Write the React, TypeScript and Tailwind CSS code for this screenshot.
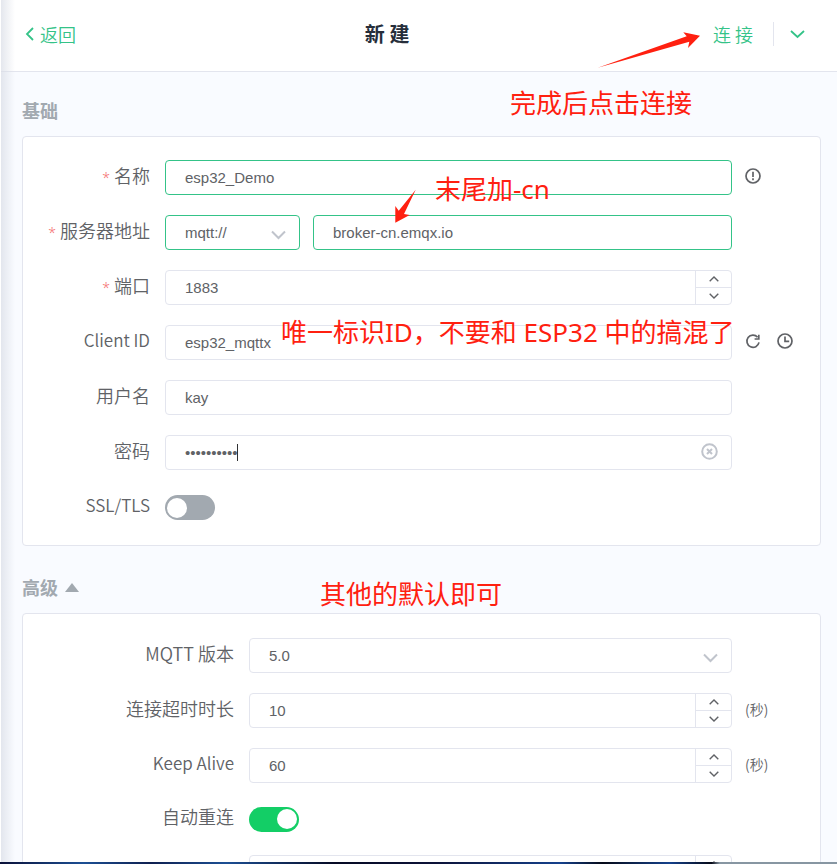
import { useState } from "react";
import type { ReactNode } from "react";

const inputFont = "font-['Liberation_Sans','Noto_Sans_CJK_SC',sans-serif]";
const fieldBase = `block h-[35px] w-full appearance-none rounded border bg-white px-[19px] text-[15px] text-[#606266] outline-none ${inputFont}`;
const plain = "border-[#e3e5ee]";
const active = "border-[#34c388]";

function Chevron({ className, d = "M1 1.5l6.5 6.5L14 1.5", width = 2 }: { className?: string; d?: string; width?: number }) {
  return (
    <svg className={className} width="15" height="10" viewBox="0 0 15 10" fill="none" stroke="currentColor" strokeWidth={width} aria-hidden="true">
      <path d={d} />
    </svg>
  );
}

type RowProps = {
  id: string;
  label?: string;
  required?: boolean;
  wide?: boolean;
  short?: boolean;
  latin?: boolean;
  extra?: ReactNode;
  children: ReactNode;
};

function Row({ id, label, required, wide, short, latin, extra, children }: RowProps) {
  return (
    <div className={`flex items-center ${short ? "h-8" : "h-[35px]"}`}>
      <div className={`${wide ? "w-[211px]" : "w-[127px]"} flex shrink-0 items-center justify-end pb-1.5`}>
        {label && (
          <label htmlFor={id} className={`leading-7 font-[350] whitespace-nowrap ${latin ? "text-[17px]" : "text-lg"}`}>
            {required && <span className="mr-1 font-['Noto_Sans'] text-sm text-[#f56c6c]">*</span>}
            {label}
          </label>
        )}
      </div>
      <div className="ml-[15px] flex min-w-0 flex-1 items-center gap-[13px]">{children}</div>
      <div className="flex w-[88px] shrink-0 items-center gap-4 pb-1 pl-[13px] text-sm font-[350]">{extra}</div>
    </div>
  );
}

function TextField({ id, value, on }: { id: string; value: string; on?: boolean }) {
  return <input id={id} type="text" defaultValue={value} className={`${fieldBase} ${on ? active : plain}`} />;
}

function NumberField({ id, value, label }: { id: string; value: number; label?: string }) {
  const [n, setN] = useState(value);
  return (
    <div className="flex h-[35px] w-full overflow-hidden rounded border border-[#e3e5ee] bg-white">
      <input
        id={id}
        type="text"
        inputMode="numeric"
        aria-label={label}
        value={n}
        onChange={(e) => setN(Number(e.target.value) || 0)}
        className={`min-w-0 flex-1 px-[19px] pt-0.5 text-[15px] text-[#606266] outline-none ${inputFont}`}
      />
      <div className="flex w-9 flex-col border-l border-[#e3e5ee]">
        <button type="button" aria-label="增加" onClick={() => setN(n + 1)} className="flex flex-1 items-center justify-center border-b border-[#e3e5ee]">
          <svg width="10" height="6" viewBox="0 0 10 6" fill="none" stroke="currentColor" strokeWidth="1.4"><path d="M.7 5.2L5 1l4.3 4.2" /></svg>
        </button>
        <button type="button" aria-label="减少" onClick={() => setN(n - 1)} className="flex flex-1 items-center justify-center">
          <svg width="10" height="6" viewBox="0 0 10 6" fill="none" stroke="currentColor" strokeWidth="1.4"><path d="M.7.8L5 5 9.3.8" /></svg>
        </button>
      </div>
    </div>
  );
}

function SelectField({ id, label, value, on, options }: { id: string; label?: string; value: string; on?: boolean; options: string[] }) {
  return (
    <div className="relative w-full">
      <select id={id} aria-label={label} defaultValue={value} className={`${fieldBase} pt-0.5 ${on ? active : plain}`}>
        {options.map((o) => <option key={o}>{o}</option>)}
      </select>
      <Chevron className="pointer-events-none absolute top-[15px] right-3.5 text-[#c0c4cc]" />
    </div>
  );
}

function Toggle({ id, on }: { id: string; on?: boolean }) {
  return (
    <input
      id={id}
      type="checkbox"
      role="switch"
      defaultChecked={on}
      className="flex h-[25px] w-[50px] appearance-none items-center rounded-full bg-[#a2a9b0] px-0.5 before:size-5 before:rounded-full before:bg-white checked:justify-end checked:bg-[#13ce66]"
    />
  );
}

function IconButton({ label, children }: { label: string; children: ReactNode }) {
  return (
    <button type="button" aria-label={label} className="shrink-0">
      <svg width="16" height="16" viewBox="0 0 16 16" fill="none" stroke="currentColor" strokeWidth="1.7">{children}</svg>
    </button>
  );
}

const note =
  "pointer-events-none absolute font-['Noto_Sans','Noto_Sans_CJK_SC',sans-serif] text-[26px] leading-9 whitespace-nowrap text-[#ff2010]";

export default function App() {
  return (
    <div className="relative flex h-screen flex-col overflow-hidden bg-[#f9fbff] font-['Noto_Sans_CJK_SC',sans-serif] text-[#606266]">
      <header className="grid h-[72px] shrink-0 grid-cols-[6fr_1fr_7fr] items-center border-b border-[#e3e5ee] bg-white pr-8 pb-[3px] pl-[25px]">
        <a href="#back" className="flex items-center gap-1.5 text-lg font-[350] text-[#34c388]">
          <svg width="9" height="14" viewBox="0 0 9 14" fill="none" stroke="currentColor" strokeWidth="1.8" aria-hidden="true"><path d="M8 1L2 7l6 6" /></svg>
          返回
        </a>
        <h1 className="text-center text-xl font-bold whitespace-nowrap text-[#262e3b]">新 建</h1>
        <div className="flex items-center justify-end text-[#34c388]">
          <button type="button" className="text-lg font-[350]">连 接</button>
          <span className="mr-4 ml-5 h-6 w-px bg-[#e3e5ee]" />
          <button type="button" aria-label="更多"><Chevron width={1.8} d="M1 2l6.5 6L14 2" /></button>
        </div>
      </header>

      <main className="min-h-0 flex-1 overflow-hidden pr-4 pl-[22px]">
        <h2 className="pt-6 text-lg leading-7 font-bold text-[#a2a9b0]">基础</h2>
        <section className="mt-3 flex flex-col gap-5 rounded border border-[#e3e5ee] bg-white pt-[23px] pb-5">
          <Row id="name" label="名称" required extra={<IconButton label="提示"><circle cx="8" cy="8" r="7" /><path d="M8 3.7v5.2M8 10.3v2" /></IconButton>}>
            <TextField id="name" value="esp32_Demo" on />
          </Row>
          <Row id="host" label="服务器地址" required>
            <div className="w-[135px] shrink-0">
              <SelectField id="protocol" label="协议" value="mqtt://" on options={["mqtt://", "mqtts://", "ws://", "wss://"]} />
            </div>
            <TextField id="host" value="broker-cn.emqx.io" on />
          </Row>
          <Row id="port" label="端口" required>
            <NumberField id="port" value={1883} />
          </Row>
          <Row
            id="client"
            label="Client ID"
            latin
            extra={
              <>
                <IconButton label="刷新"><path d="M14 9.4A6.1 6.1 0 1 1 12.6 4.2M13.8 1.8v4.2H9.6" /></IconButton>
                <IconButton label="时间"><circle cx="8" cy="8" r="7" /><path d="M8 3.6v4.8h4.2" /></IconButton>
              </>
            }
          >
            <TextField id="client" value="esp32_mqttx" />
          </Row>
          <Row id="user" label="用户名">
            <TextField id="user" value="kay" />
          </Row>
          <Row id="password" label="密码">
            <div className="relative w-full">
              <input id="password" type="password" defaultValue="0123456789" className={`${fieldBase} ${plain}`} />
              <span className="absolute top-[9px] left-[72px] h-[17px] w-px bg-[#303133]" />
              <button type="button" aria-label="清除" className="absolute top-2 right-3.5 text-[#c0c4cc]">
                <svg width="17" height="17" viewBox="0 0 17 17" fill="none" stroke="currentColor" strokeWidth="2"><circle cx="8.5" cy="8.5" r="7.3" /><path d="M6 6l5 5M11 6l-5 5" /></svg>
              </button>
            </div>
          </Row>
          <Row id="ssl" label="SSL/TLS" latin>
            <Toggle id="ssl" />
          </Row>
        </section>

        <h2 className="mt-[27px] text-lg leading-7 font-bold text-[#a2a9b0]">
          <button type="button" className="flex items-center gap-[7px]">
            高级
            <svg width="14" height="9" viewBox="0 0 14 9" fill="currentColor" aria-hidden="true"><path d="M7 0l7 9H0z" /></svg>
          </button>
        </h2>
        <section className="mt-3 flex flex-col gap-5 rounded border border-[#e3e5ee] bg-white pt-6 pb-6">
          <Row wide id="version" label="MQTT 版本">
            <SelectField id="version" value="5.0" options={["3.1", "3.1.1", "5.0"]} />
          </Row>
          <Row wide id="timeout" label="连接超时时长" extra="(秒)">
            <NumberField id="timeout" value={10} />
          </Row>
          <Row wide id="keepalive" label="Keep Alive" latin extra="(秒)">
            <NumberField id="keepalive" value={60} />
          </Row>
          <Row wide id="reconnect" label="自动重连" short>
            <Toggle id="reconnect" on />
          </Row>
          <Row wide id="period">
            <NumberField id="period" label="重连周期" value={4000} />
          </Row>
        </section>
      </main>

      <div className="h-0.5 shrink-0 bg-[linear-gradient(90deg,#0a1038,#1c4f94_10%,#0f2050_18%,#1c4f94_27%,#060a24_40%,#0c1238_52%,#15418c_67%,#060a18_72%,#15418c_80%,#060a18_85%,#8796a2_86%)]" />
      <div className="pointer-events-none absolute top-0 bottom-0.5 left-0 w-[15px] border-l border-white bg-linear-to-r from-[#d9dde6]/70 to-transparent" />

      <p className={`${note} top-[85px] left-[510px]`}>完成后点击连接</p>
      <p className={`${note} top-[171px] left-[435px]`}>末尾加-cn</p>
      <p className={`${note} top-[314px] left-[281px]`}>唯一标识ID，不要和 ESP32 中的搞混了</p>
      <p className={`${note} top-[576px] left-[320px]`}>其他的默认即可</p>
      <svg className="pointer-events-none absolute top-[30px] left-[596px] text-[#ff2010]" width="106" height="40" viewBox="596 30 106 40" fill="currentColor" aria-hidden="true">
        <path d="M597.7 67.7L686.7 36.3 683.3 32.3 700 35.7 688 48 689.3 41.7z" />
      </svg>
      <svg className="pointer-events-none absolute top-[188px] left-[393px] text-[#ff2010]" width="25" height="36" viewBox="393 188 25 36" fill="currentColor" aria-hidden="true">
        <path d="M415.7 189.7L398.7 210.7 395.3 206v16.7L409.7 215 404 214z" />
      </svg>
    </div>
  );
}
